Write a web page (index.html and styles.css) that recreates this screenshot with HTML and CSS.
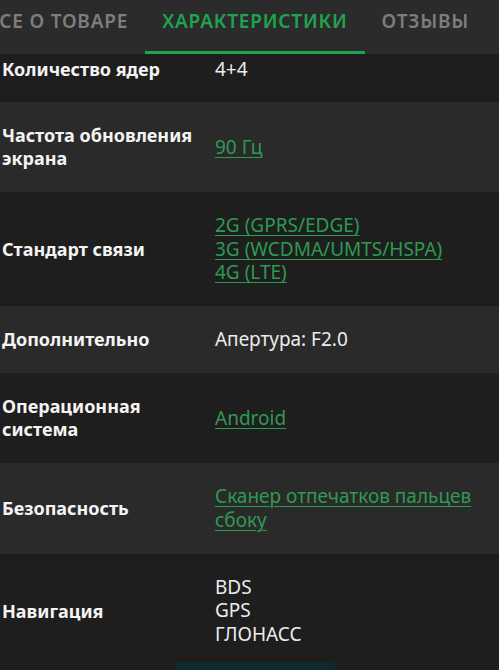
FILE: index.html
```html
<!DOCTYPE html>
<html lang="ru">
<head>
<meta charset="utf-8">
<link rel="stylesheet" href="styles.css">
</head>
<body>
<div class="page">
  <nav class="tabs">
    <div class="tab tab-first">ВСЕ О ТОВАРЕ</div>
    <div class="tab active">ХАРАКТЕРИСТИКИ</div>
    <div class="tab">ОТЗЫВЫ</div>
  </nav>
  <div class="specs">
    <div class="row dark first">
      <div class="label">Количество ядер</div>
      <div class="value">4+4</div>
    </div>
    <div class="row light">
      <div class="label">Частота обновления<br>экрана</div>
      <div class="value"><a class="link">90 Гц</a></div>
    </div>
    <div class="row dark">
      <div class="label">Стандарт связи</div>
      <div class="value"><a class="link">2G (GPRS/EDGE)</a><br><a class="link">3G (WCDMA/UMTS/HSPA)</a><br><a class="link">4G (LTE)</a></div>
    </div>
    <div class="row light">
      <div class="label">Дополнительно</div>
      <div class="value">Апертура: F2.0</div>
    </div>
    <div class="row dark">
      <div class="label">Операционная<br>система</div>
      <div class="value"><a class="link">Android</a></div>
    </div>
    <div class="row light">
      <div class="label">Безопасность</div>
      <div class="value"><a class="link">Сканер отпечатков пальцев<br>сбоку</a></div>
    </div>
    <div class="row dark">
      <div class="label">Навигация</div>
      <div class="value">BDS<br>GPS<br>ГЛОНАСС</div>
    </div>
  </div>
  <div class="bottom-bar"></div>
</div>
</body>
</html>
```

FILE: styles.css
```css
html, body {
  margin: 0;
  padding: 0;
  background: #1f1e1e;
}
.page {
  position: relative;
  width: 499px;
  height: 670px;
  overflow: hidden;
  font-family: "Noto Sans", "Liberation Sans", sans-serif;
  color: #f2f2f2;
}
.tabs {
  display: flex;
  height: 54px;
  background: #2b2b2b;
  white-space: nowrap;
}
.tab {
  box-sizing: border-box;
  height: 54px;
  padding: 0 17px 12px;
  display: flex;
  align-items: center;
  font-size: 19px;
  font-weight: 600;
  color: #7d7d7d;
  letter-spacing: 0.8px;
}
.tab-first {
  margin-left: -14px;
  padding-left: 0;
}
.tab.active {
  color: #1fa34e;
  border-bottom: 3px solid #1fa34e;
  padding-bottom: 9px;
}
.specs {
  display: flex;
  flex-direction: column;
}
.row {
  display: grid;
  grid-template-columns: 213px 1fr;
  align-items: center;
  padding: 22px 0 22px 2px;
  line-height: 23px;
}
.row.first {
  padding-top: 4px;
  padding-bottom: 21px;
}
.dark { background: #1f1e1e; }
.light { background: #2b2a2a; }
.label {
  font-size: 18px;
  font-weight: 700;
  color: #f4f4f4;
}
.value {
  font-size: 19px;
  font-weight: 400;
  line-height: 23.3px;
  color: #ececec;
}
.link {
  color: #2d9a52;
  text-decoration: underline;
  text-decoration-thickness: 1px;
  text-underline-offset: 3px;
}
.bottom-bar {
  position: absolute;
  left: 175px;
  bottom: 0;
  width: 160px;
  height: 8px;
  background: #0e2a2c;
}
```
